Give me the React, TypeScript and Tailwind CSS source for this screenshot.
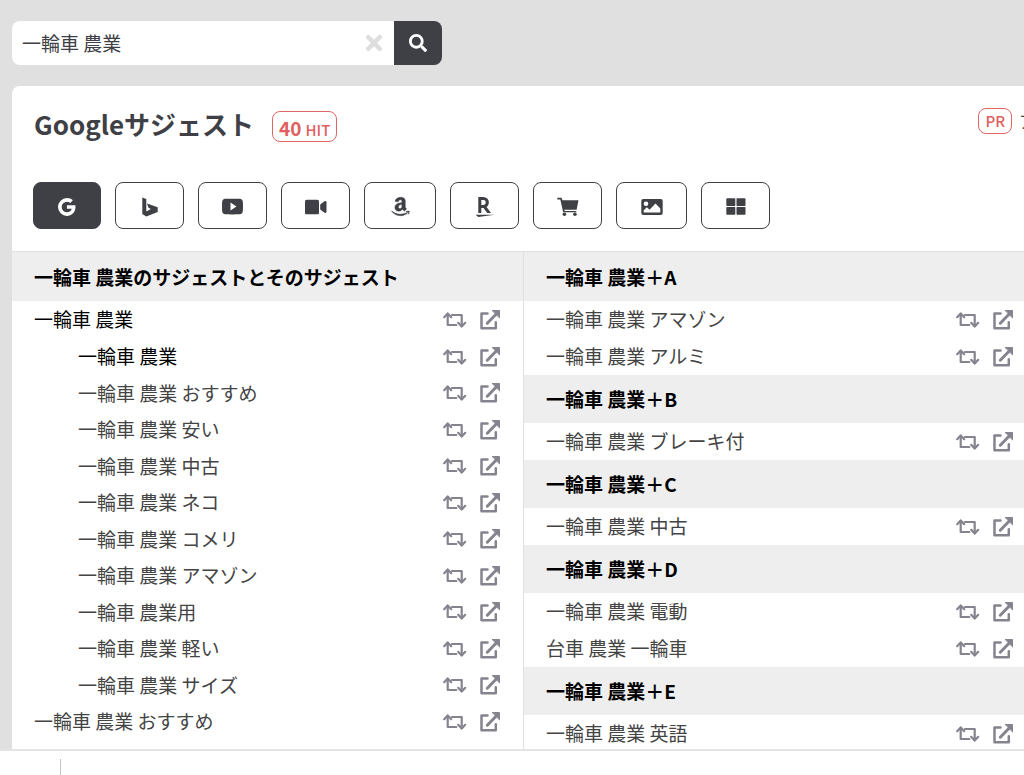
import React from "react";
import { FaAmazon, FaSearch, FaTimes } from "react-icons/fa";
import { BiLogoGoogle } from "react-icons/bi";
import { IoLogoYoutube } from "react-icons/io";
import { SiRakuten } from "react-icons/si";

function RepeatIcon() {
  return (
    <svg viewBox="0 0 24 18" className="h-[18px] w-6" fill="none" stroke="currentColor" strokeWidth="2.2" strokeLinejoin="round" strokeLinecap="round" aria-hidden="true">
      <path d="M4.700 2.800v11.200h8.600" />
      <path d="M1.200 6.200 4.700 2.500l3.500 3.700" />
      <path d="M8.900 4h9.800v11.200" />
      <path d="M15.200 11.800l3.500 3.700 3.500-3.700" />
    </svg>
  );
}

function OpenIcon() {
  return (
    <svg viewBox="0 0 22 22" className="size-[22px]" fill="none" stroke="currentColor" strokeLinejoin="round" strokeLinecap="round" aria-hidden="true">
      <path d="M8.500 4.500H2.500v14.700h14.300v-6" strokeWidth="2.500" />
      <path d="M8.300 14.200 18 4.200" strokeWidth="3" />
      <path d="M13.500 1.500h7v7z" fill="currentColor" strokeWidth="1" />
    </svg>
  );
}

function BingIcon() {
  return (
    <svg viewBox="0 0 16 20" className="h-5 w-4" fill="currentColor" aria-hidden="true">
      <path d="M.3.500 4.300 2v12.600l4.600-2.600-2.400-1.200-1.500-4.300 10.700 3.800v4.600L4.300 19.500.3 17z" />
    </svg>
  );
}

function VideoIcon() {
  return (
    <svg viewBox="0 0 22 16" className="h-4 w-[22px]" fill="currentColor" aria-hidden="true">
      <rect x="0" y=".7" width="14" height="14.600" rx="1.600" />
      <path d="M15.200 5.600 19.500 2.300Q21.500 1.500 21.500 3.200v9.600q0 1.700-2 .9l-4.300-3.300z" />
    </svg>
  );
}

function CartIcon() {
  return (
    <svg viewBox="0 0 22 20" className="h-5 w-[22px]" fill="currentColor" aria-hidden="true">
      <path d="M.3.700h4.200l1 2.500h16L19.600 12.700H7.300l.3 1.200h11.700v1.400H6.200L3.300 2.600H.3z" />
      <circle cx="7.400" cy="17.200" r="1.800" />
      <circle cx="17.900" cy="17.200" r="1.800" />
    </svg>
  );
}

function ImageIcon() {
  return (
    <svg viewBox="0 0 22 16" className="h-4 w-[22px]" aria-hidden="true">
      <rect x=".3" width="21.400" height="16" rx="2" fill="currentColor" />
      <circle cx="5" cy="4.800" r="2.300" fill="white" />
      <path d="M2.700 13.500v-2.300l3.200-3 2.600 2.500L14.500 4.500l4.800 5v4z" fill="white" />
    </svg>
  );
}

function GridIcon() {
  return (
    <svg viewBox="0 0 20 17" className="h-[17px] w-5" fill="currentColor" aria-hidden="true">
      <rect x=".3" y=".3" width="9" height="7.600" rx=".7" />
      <rect x="10.500" y=".3" width="9" height="7.600" rx=".7" />
      <rect x=".3" y="9.100" width="9" height="7.600" rx=".7" />
      <rect x="10.500" y="9.100" width="9" height="7.600" rx=".7" />
    </svg>
  );
}

const tabs = [
  { label: "Google", icon: <BiLogoGoogle className="size-6" />, width: "w-[68px]" },
  { label: "Bing", icon: <BingIcon />, width: "w-[69px]" },
  { label: "YouTube", icon: <IoLogoYoutube className="size-[21px]" />, width: "w-[69px]" },
  { label: "動画", icon: <VideoIcon />, width: "w-[69px]" },
  { label: "Amazon", icon: <FaAmazon className="size-[21px]" stroke="currentColor" strokeWidth="10" />, width: "w-[72px]" },
  { label: "楽天", icon: <SiRakuten className="size-5" />, width: "w-[69px]" },
  { label: "ショッピング", icon: <CartIcon />, width: "w-[69px]" },
  { label: "画像", icon: <ImageIcon />, width: "w-[71px]" },
  { label: "すべて", icon: <GridIcon />, width: "w-[69px]" },
];

const suggestions = ["一輪車 農業", "一輪車 農業 おすすめ", "一輪車 農業 安い", "一輪車 農業 中古", "一輪車 農業 ネコ", "一輪車 農業 コメリ", "一輪車 農業 アマゾン", "一輪車 農業用", "一輪車 農業 軽い", "一輪車 農業 サイズ"];

const groups = [
  { title: "一輪車 農業＋A", items: ["一輪車 農業 アマゾン", "一輪車 農業 アルミ"] },
  { title: "一輪車 農業＋B", items: ["一輪車 農業 ブレーキ付"] },
  { title: "一輪車 農業＋C", items: ["一輪車 農業 中古"] },
  { title: "一輪車 農業＋D", items: ["一輪車 農業 電動", "台車 農業 一輪車"] },
  { title: "一輪車 農業＋E", items: ["一輪車 農業 英語"] },
];

function Row({ text, nested = false, visited = false, height = "h-[37px]" }: { text: string; nested?: boolean; visited?: boolean; height?: string }) {
  return (
    <li className={`flex items-center pr-[22px] ${height} ${nested ? "pl-[66px]" : "pl-[22px]"}`}>
      <a href="#" className={`flex-1 whitespace-nowrap ${visited ? "text-black" : "text-[#444]"}`}>{text}</a>
      <span className="flex items-center gap-3 text-[#85838e]">
        <button type="button" aria-label={`${text} で再検索`}><RepeatIcon /></button>
        <a href="#" aria-label={`${text} を開く`}><OpenIcon /></a>
      </span>
    </li>
  );
}

export default function App() {
  return (
    <div className="min-h-screen overflow-x-hidden bg-[#e0e0e0] pl-3 font-['Noto_Sans_CJK_JP',sans-serif] text-[19px] text-[#3e4045]">
      <form className="flex w-[430px] py-[21px]" onSubmit={(e) => e.preventDefault()}>
        <div className="flex h-11 flex-1 items-center rounded-l-lg bg-white pr-2 pl-[10px]">
          <input aria-label="キーワード" defaultValue="一輪車 農業" className="min-w-0 flex-1 bg-transparent outline-none" />
          <button type="button" aria-label="クリア" className="text-[#dedede]"><FaTimes className="size-6" /></button>
        </div>
        <button type="submit" aria-label="検索" className="flex h-11 w-12 items-center justify-center rounded-r-lg bg-[#3e4045] text-white">
          <FaSearch className="size-[18px]" />
        </button>
      </form>

      <main className="w-screen rounded-tl-lg bg-white">
        <header className="flex h-24 items-start justify-between pt-[22px] pl-[22px]">
          <div className="flex items-start gap-[18px]">
            <h1 className="text-[26px] leading-8 font-bold">Googleサジェスト</h1>
            <span className="mt-[3px] flex h-[31px] items-baseline gap-1 rounded-lg border border-[#e06666] px-[6px] text-[#e06060]">
              <b className="text-[19px] leading-[31px] font-bold">40</b>
              <span className="text-[15px] font-medium">HIT</span>
            </span>
          </div>
          <a href="#" className="flex items-center gap-[7px] text-[17px] whitespace-nowrap text-[#444]">
            <span className="flex h-[26px] items-center rounded-lg border border-[#e06666] px-[6px] text-[15px] font-medium text-[#e06060]">PR</span>
            ア
          </a>
        </header>

        <nav className="flex gap-[14px] px-[21px] pb-[22px]">
          {tabs.map((t, i) => (
            <button key={t.label} type="button" aria-label={t.label} className={`flex h-[47px] items-center justify-center rounded-lg border border-[#3e4045] pt-0.5 ${t.width} ${i === 0 ? "bg-[#3e4045] text-white" : "bg-white"}`}>
              {t.icon}
            </button>
          ))}
        </nav>

        <div className="grid grid-cols-2 border-t border-[#e0e0e0]">
          <section className="border-r border-[#e0e0e0]">
            <h2 className="flex h-[49px] items-center bg-[#eee] pt-0.5 pl-[22px] font-bold text-black">一輪車 農業のサジェストとそのサジェスト</h2>
            <ul>
              <Row text="一輪車 農業" visited />
              {suggestions.map((s, i) => (
                <Row key={s} text={s} nested visited={i === 0} height={i % 2 === 1 ? "h-9" : "h-[37px]"} />
              ))}
              <Row text="一輪車 農業 おすすめ" />
            </ul>
          </section>
          <section>
            {groups.map((g, i) => (
              <div key={g.title}>
                <h2 className={`flex items-center bg-[#eee] pl-[22px] font-bold text-black ${i === 0 ? "h-[49px] pt-0.5" : "h-12"}`}>{g.title}</h2>
                <ul>{g.items.map((s) => <Row key={s} text={s} />)}</ul>
              </div>
            ))}
          </section>
        </div>
      </main>

      <footer className="fixed inset-x-0 bottom-0 h-[26px] border-t-2 border-[#e4e4e4] bg-white pt-2 pl-[60px]">
        <div className="h-full w-px bg-[#c4c4c4]" />
      </footer>
    </div>
  );
}
